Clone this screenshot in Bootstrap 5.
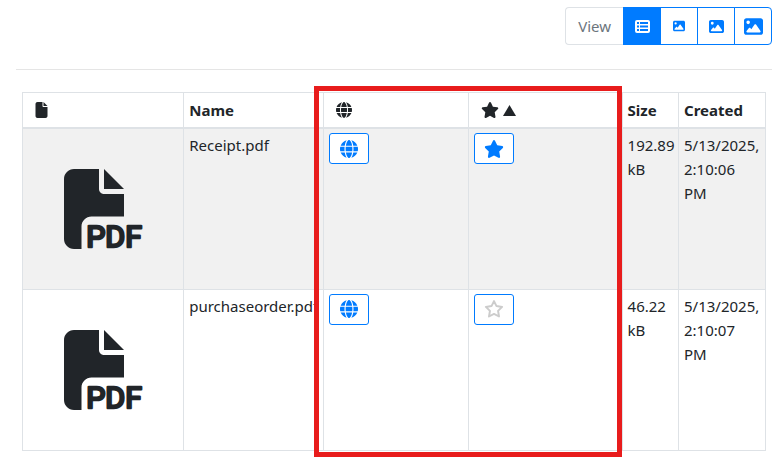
<!DOCTYPE html>
<html lang="en">
<head>
<meta charset="utf-8">
<meta name="viewport" content="width=device-width, initial-scale=1">
<title>Files</title>
<link href="https://cdn.jsdelivr.net/npm/bootstrap@5.3.0/dist/css/bootstrap.min.css" rel="stylesheet">
<style>
  body { font-family: "Noto Sans", "Open Sans", sans-serif; font-size: 15px; line-height: 24px; color: #212529; }
  svg { fill: currentColor; display: inline-block; vertical-align: middle; }
  .page { padding: 7px 10px 16px 16px; }
  .view-switch .btn { --bs-btn-color: #007bff; --bs-btn-border-color: #007bff; --bs-btn-active-bg: #007bff; --bs-btn-active-border-color: #007bff; --bs-btn-hover-bg: #007bff; --bs-btn-bg: #fff; width: 38px; height: 38px; padding: 0; display: flex; align-items: center; justify-content: center; border-radius: 4px; }
  .view-label { height: 38px; padding: 6px 12px; border: 1px solid #dee2e6; border-right: 0; border-radius: 4px 0 0 4px; color: #6c757d; }
  .rule { margin: 24px 0 22px; border-top: 1px solid #000; opacity: .1; }
  .file-area { margin: 0 6px; }
  .file-table { table-layout: fixed; border-color: #dee2e6; color: #212529; --bs-table-striped-bg: #f1f1f1; --bs-table-color: #212529; }
  .file-table > thead th { padding: 5px; height: 35px; border-bottom-width: 2px; vertical-align: middle; white-space: nowrap; }
  .file-table > thead svg { vertical-align: -2px; }
  .file-table > tbody td { padding: 4px 4px 4px 5px; height: 161px; }
  .file-table .icon-head { padding-left: 12px; }
  .file-table > tbody td.preview { vertical-align: middle; text-align: center; }
  .toggle-btn { --bs-btn-color: #007bff; --bs-btn-border-color: #007bff; --bs-btn-bg: #fff; width: 40px; height: 31px; padding: 0; display: flex; align-items: center; justify-content: center; border-radius: 3px; }
  .fav-off { color: #ccc; }
  .c-preview { width: 21.7%; } .c-name { width: 18.8%; } .c-public { width: 19.5%; }
  .c-fav { width: 20.7%; } .c-size { width: 7.6%; }
  .highlight-box { top: -6px; bottom: -6px; left: 39.2%; width: 41.4%; border: 5px solid #e81c1c; pointer-events: none; }
</style>
</head>
<body>
<svg width="0" height="0" class="position-absolute" aria-hidden="true">
  <symbol id="i-file" viewBox="0 0 384 512"><path d="M0 64C0 28.7 28.7 0 64 0H224V128c0 17.7 14.3 32 32 32H384V448c0 35.3-28.7 64-64 64H64c-35.3 0-64-28.7-64-64V64zm384 64H256V0L384 128z"/></symbol>
  <symbol id="i-globe" viewBox="0 0 512 512"><path d="M352 256c0 22.2-1.2 43.6-3.3 64H163.3c-2.2-20.4-3.3-41.8-3.3-64s1.2-43.6 3.3-64H348.7c2.2 20.4 3.3 41.8 3.3 64zm28.8-64H503.9c5.3 20.5 8.1 41.9 8.1 64s-2.8 43.5-8.1 64H380.8c2.1-20.6 3.2-42 3.2-64s-1.1-43.4-3.2-64zm112.6-32H376.7c-10-63.9-29.8-117.4-55.3-151.6c78.3 20.7 142 77.5 171.9 151.6zm-149.1 0H167.7c6.1-36.4 15.5-68.6 27-94.7c10.5-23.6 22.2-40.7 33.5-51.5C239.4 3.2 248.7 0 256 0s16.6 3.2 27.8 13.8c11.3 10.8 23 27.9 33.5 51.5c11.6 26 20.9 58.2 27 94.7zm-209 0H18.6C48.6 85.9 112.2 29.1 190.6 8.4C165.1 42.6 145.3 96.1 135.3 160zM8.1 192H131.2c-2.1 20.6-3.2 42-3.2 64s1.1 43.4 3.2 64H8.1C2.8 299.5 0 278.1 0 256s2.8-43.5 8.1-64zM194.7 446.6c-11.6-26-20.9-58.2-27-94.6H344.3c-6.1 36.4-15.5 68.6-27 94.6c-10.5 23.6-22.2 40.7-33.5 51.5C272.6 508.8 263.3 512 256 512s-16.6-3.2-27.8-13.8c-11.3-10.8-23-27.9-33.5-51.5zM135.3 352c10 63.9 29.8 117.4 55.3 151.6C112.2 482.9 48.6 426.1 18.6 352H135.3zm358.1 0c-30 74.1-93.6 130.9-171.9 151.6c25.5-34.2 45.2-87.7 55.3-151.6H493.4z"/></symbol>
  <symbol id="i-star" viewBox="0 0 576 512"><path d="M316.9 18C311.6 7 300.4 0 288.1 0s-23.4 7-28.8 18L195 150.3 51.4 171.5c-12 1.8-22 10.2-25.7 21.7s-.7 24.2 7.9 32.7L137.8 329 113.2 474.7c-2 12 3 24.2 12.9 31.3s23 8 33.8 2.3l128.3-68.5 128.3 68.5c10.8 5.7 23.9 4.9 33.8-2.3s14.9-19.3 12.9-31.3L438.5 329 542.7 225.9c8.6-8.5 11.7-21.2 7.9-32.7s-13.7-19.9-25.7-21.7L381.2 150.3 316.9 18z"/></symbol>
  <symbol id="i-star-open" viewBox="0 0 576 512"><path fill="none" stroke="currentColor" stroke-width="56" stroke-linejoin="round" d="M288 28L360 172L522 196L405 310L432 472L288 396L144 472L171 310L54 196L216 172Z"/></symbol>
  <symbol id="i-image" viewBox="0 0 512 512"><path d="M0 96C0 60.7 28.7 32 64 32H448c35.3 0 64 28.7 64 64V416c0 35.3-28.7 64-64 64H64c-35.3 0-64-28.7-64-64V96zM323.8 202.5c-4.5-6.6-11.9-10.5-19.8-10.5s-15.4 3.9-19.8 10.5l-87 127.6L170.7 297c-4.6-5.7-11.5-9-18.7-9s-14.2 3.3-18.7 9l-64 80c-5.8 7.2-6.9 17.1-2.9 25.4s12.4 13.6 21.6 13.6h96 32H424c8.9 0 17.1-4.9 21.2-12.8s3.6-17.4-1.4-24.7l-120-176zM112 192a48 48 0 1 0 0-96 48 48 0 1 0 0 96z"/></symbol>
  <symbol id="i-list" viewBox="0 0 15 13"><path fill-rule="evenodd" d="M2 0H13Q15 0 15 2V11Q15 13 13 13H2Q0 13 0 11V2Q0 0 2 0ZM2 2V4H4V2ZM5 2V4H13V2ZM2 5.500V7.500H4V5.500ZM5 5.500V7.500H13V5.500ZM2 9V11H4V9ZM5 9V11H13V9Z"/></symbol>
  <symbol id="i-pdf" viewBox="0 0 512 512"><path d="M0 64C0 28.700 28.700 0 64 0L224 0l0 128c0 17.700 14.300 32 32 32l128 0 0 144-208 0c-35.300 0-64 28.700-64 64l0 144-48 0c-35.300 0-64-28.700-64-64L0 64zm384 64l-128 0L256 0 384 128z"/><text x="142" y="502" font-family="Roboto" font-weight="400" font-size="194" stroke="currentColor" stroke-width="16" stroke-linejoin="round">PDF</text></symbol>
</svg>

<main class="page">
  <div class="view-switch d-flex justify-content-end">
    <span class="view-label" id="view-label">View</span>
    <div class="btn-group" role="group" aria-labelledby="view-label">
      <button type="button" class="btn btn-outline-primary active rounded-0" aria-label="List"><svg width="15" height="13"><use href="#i-list"/></svg></button>
      <button type="button" class="btn btn-outline-primary" aria-label="Small images"><svg width="12" height="12"><use href="#i-image"/></svg></button>
      <button type="button" class="btn btn-outline-primary" aria-label="Medium images"><svg width="15" height="15"><use href="#i-image"/></svg></button>
      <button type="button" class="btn btn-outline-primary" aria-label="Large images"><svg width="19" height="19"><use href="#i-image"/></svg></button>
    </div>
  </div>
  <hr class="rule">
  <div class="file-area position-relative">
    <table class="table table-bordered table-striped file-table mb-0">
      <colgroup><col class="c-preview"><col class="c-name"><col class="c-public"><col class="c-fav"><col class="c-size"><col></colgroup>
      <thead>
        <tr>
          <th scope="col" class="icon-head" aria-label="File"><svg width="13" height="16"><use href="#i-file"/></svg></th>
          <th scope="col">Name</th>
          <th scope="col" class="icon-head" aria-label="Public"><svg width="16" height="16"><use href="#i-globe"/></svg></th>
          <th scope="col" class="icon-head" aria-label="Favorite, sorted ascending"><svg width="18" height="16"><use href="#i-star"/></svg> <svg width="13" height="13" viewBox="0 0 13 13"><path d="M6.500 0L13 11H0Z"/></svg></th>
          <th scope="col">Size</th>
          <th scope="col">Created</th>
        </tr>
      </thead>
      <tbody>
        <tr>
          <td class="preview"><svg width="80" height="80" role="img" aria-label="PDF file"><use href="#i-pdf"/></svg></td>
          <td>Receipt.pdf</td>
          <td><button type="button" class="btn btn-outline-primary toggle-btn" aria-label="Public"><svg width="18" height="18"><use href="#i-globe"/></svg></button></td>
          <td><button type="button" class="btn btn-outline-primary toggle-btn" aria-label="Favorite"><svg width="20" height="18"><use href="#i-star"/></svg></button></td>
          <td>192.89 kB</td>
          <td>5/13/2025,<br>2:10:06<br>PM</td>
        </tr>
        <tr>
          <td class="preview"><svg width="80" height="80" role="img" aria-label="PDF file"><use href="#i-pdf"/></svg></td>
          <td>purchaseorder.pdf</td>
          <td><button type="button" class="btn btn-outline-primary toggle-btn" aria-label="Public"><svg width="18" height="18"><use href="#i-globe"/></svg></button></td>
          <td><button type="button" class="btn btn-outline-primary toggle-btn" aria-label="Favorite"><svg class="fav-off" width="20" height="18"><use href="#i-star-open"/></svg></button></td>
          <td>46.22 kB</td>
          <td>5/13/2025,<br>2:10:07<br>PM</td>
        </tr>
      </tbody>
    </table>
    <div class="highlight-box position-absolute"></div>
  </div>
</main>
<script src="https://cdn.jsdelivr.net/npm/bootstrap@5.3.0/dist/js/bootstrap.bundle.min.js"></script>
</body>
</html>
